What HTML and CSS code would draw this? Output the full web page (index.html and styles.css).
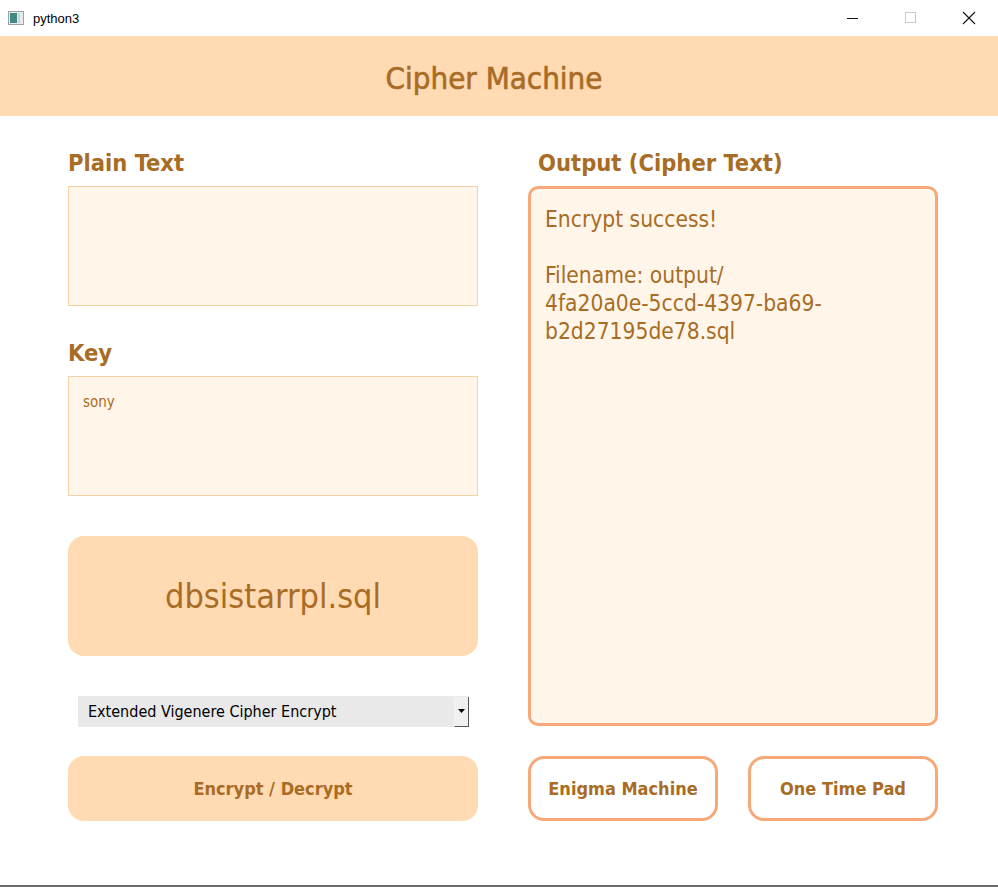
FILE: index.html
```html
<!DOCTYPE html>
<html>
<head>
<meta charset="utf-8">
<title>python3</title>
<link rel="stylesheet" href="styles.css">
</head>
<body>
<div class="window">
  <div class="titlebar">
    <div class="app">
      <svg class="app-icon" width="16" height="14" viewBox="0 0 16 14">
        <rect x="0.5" y="0.5" width="15" height="13" fill="#e8ecec" stroke="#9aa3a8"/>
        <rect x="2" y="2" width="7" height="10" fill="#3f8a82"/>
        <rect x="10" y="2" width="2" height="10" fill="#c8d4d4"/>
      </svg>
      <span class="app-name">python3</span>
    </div>
    <div class="controls">
      <span class="ctl"><svg width="12" height="12" viewBox="0 0 12 12"><line x1="0" y1="6.5" x2="11" y2="6.5" stroke="#111" stroke-width="1"/></svg></span>
      <span class="ctl"><svg width="12" height="12" viewBox="0 0 12 12"><rect x="0.5" y="0.5" width="10" height="10" fill="none" stroke="#c9c9c9"/></svg></span>
      <span class="ctl"><svg width="14" height="14" viewBox="0 0 14 14"><path d="M1 1 L13 13 M13 1 L1 13" stroke="#111" stroke-width="1.1"/></svg></span>
    </div>
  </div>
  <header class="header">Cipher Machine</header>
  <main class="content">
    <section class="col">
      <div class="field">
        <div class="label">Plain Text</div>
        <div class="textbox"></div>
      </div>
      <div class="field">
        <div class="label">Key</div>
        <div class="textbox"><span class="key-text">sony</span></div>
      </div>
      <button class="file-btn">dbsistarrpl.sql</button>
      <div class="combo">
        <span class="combo-text">Extended Vigenere Cipher Encrypt</span>
        <span class="combo-arrow"><svg width="7" height="4" viewBox="0 0 7 4"><path d="M0 0 H7 L3.5 4 Z" fill="#000"/></svg></span>
      </div>
      <button class="main-btn">Encrypt / Decrypt</button>
    </section>
    <section class="col">
      <div class="field">
        <div class="label label-indent">Output (Cipher Text)</div>
        <div class="output">Encrypt success!<br><br>Filename: output/<br>4fa20a0e-5ccd-4397-ba69-<br>b2d27195de78.sql</div>
      </div>
      <div class="btn-row">
        <button class="outline-btn">Enigma Machine</button>
        <button class="outline-btn">One Time Pad</button>
      </div>
    </section>
  </main>
  <div class="bottom-edge"></div>
</div>
</body>
</html>
```
FILE: styles.css
```css
html, body {
  margin: 0;
  padding: 0;
  background: #ffffff;
}
.window {
  width: 998px;
  height: 887px;
  display: flex;
  flex-direction: column;
  font-family: "DejaVu Sans Condensed", "DejaVu Sans", sans-serif;
  color: #a86c25;
  overflow: hidden;
}
.titlebar {
  height: 36px;
  display: flex;
  align-items: center;
  justify-content: space-between;
  background: #ffffff;
  flex-shrink: 0;
}
.app {
  display: flex;
  align-items: center;
  padding-left: 8px;
  gap: 9px;
}
.app-name {
  font-family: "Liberation Sans", sans-serif;
  font-size: 13px;
  color: #000;
}
.controls {
  display: flex;
  align-items: center;
  height: 36px;
}
.ctl {
  width: 58px;
  height: 36px;
  display: flex;
  align-items: center;
  justify-content: center;
}
.header {
  height: 80px;
  flex-shrink: 0;
  background: #ffdab3;
  display: flex;
  align-items: center;
  justify-content: center;
  font-size: 31px;
  -webkit-text-stroke: 0.6px #a86c25;
  padding-top: 3px;
  padding-right: 10px;
  box-sizing: border-box;
}
.content {
  display: grid;
  grid-template-columns: 410px 410px;
  column-gap: 50px;
  padding-left: 68px;
  flex: 1;
}
.col {
  display: flex;
  flex-direction: column;
}
.field {
  display: flex;
  flex-direction: column;
  margin-top: 34px;
}
.label {
  height: 36px;
  font-size: 23.5px;
  font-weight: bold;
  line-height: 26px;
}
.label-indent {
  padding-left: 10px;
}
.textbox {
  height: 120px;
  box-sizing: border-box;
  border: 1px solid #f2d2a4;
  background: #fff6e9;
  padding: 15px 14px;
}
.key-text {
  font-size: 15px;
  color: #a86c25;
}
.file-btn {
  margin-top: 40px;
  height: 120px;
  border: none;
  border-radius: 16px;
  background: #ffdab3;
  color: #a86c25;
  font-family: inherit;
  font-size: 34px;
  padding: 0;
}
.combo {
  margin: 40px 9px 0 10px;
  height: 31px;
  background: #e9e9e9;
  display: flex;
  align-items: center;
  justify-content: space-between;
}
.combo-text {
  font-family: "DejaVu Sans Condensed", "DejaVu Sans", sans-serif;
  font-size: 16px;
  color: #000;
  padding-left: 10px;
}
.combo-arrow {
  width: 15px;
  height: 30px;
  box-sizing: border-box;
  border-right: 1px solid #555;
  border-bottom: 1px solid #555;
  border-left: 1px solid #f4f4f4;
  background: #f0f0f0;
  display: flex;
  align-items: center;
  justify-content: center;
}
.main-btn {
  margin-top: 29px;
  height: 65px;
  border: none;
  border-radius: 16px;
  background: #ffdab3;
  color: #a86c25;
  font-family: inherit;
  font-size: 18px;
  font-weight: bold;
  padding: 0;
}
.output {
  height: 540px;
  box-sizing: border-box;
  border: 3px solid #f6a878;
  border-radius: 10px;
  background: #fff6e9;
  padding: 16px 14px;
  font-size: 22.6px;
  line-height: 28px;
}
.btn-row {
  margin-top: 30px;
  display: flex;
  gap: 30px;
}
.outline-btn {
  width: 190px;
  height: 65px;
  box-sizing: border-box;
  border: 3px solid #f6a878;
  border-radius: 16px;
  background: #ffffff;
  color: #a86c25;
  font-family: inherit;
  font-size: 18px;
  font-weight: bold;
  padding: 0;
}
.bottom-edge {
  height: 2px;
  background: #6b6b6b;
  flex-shrink: 0;
}
```
